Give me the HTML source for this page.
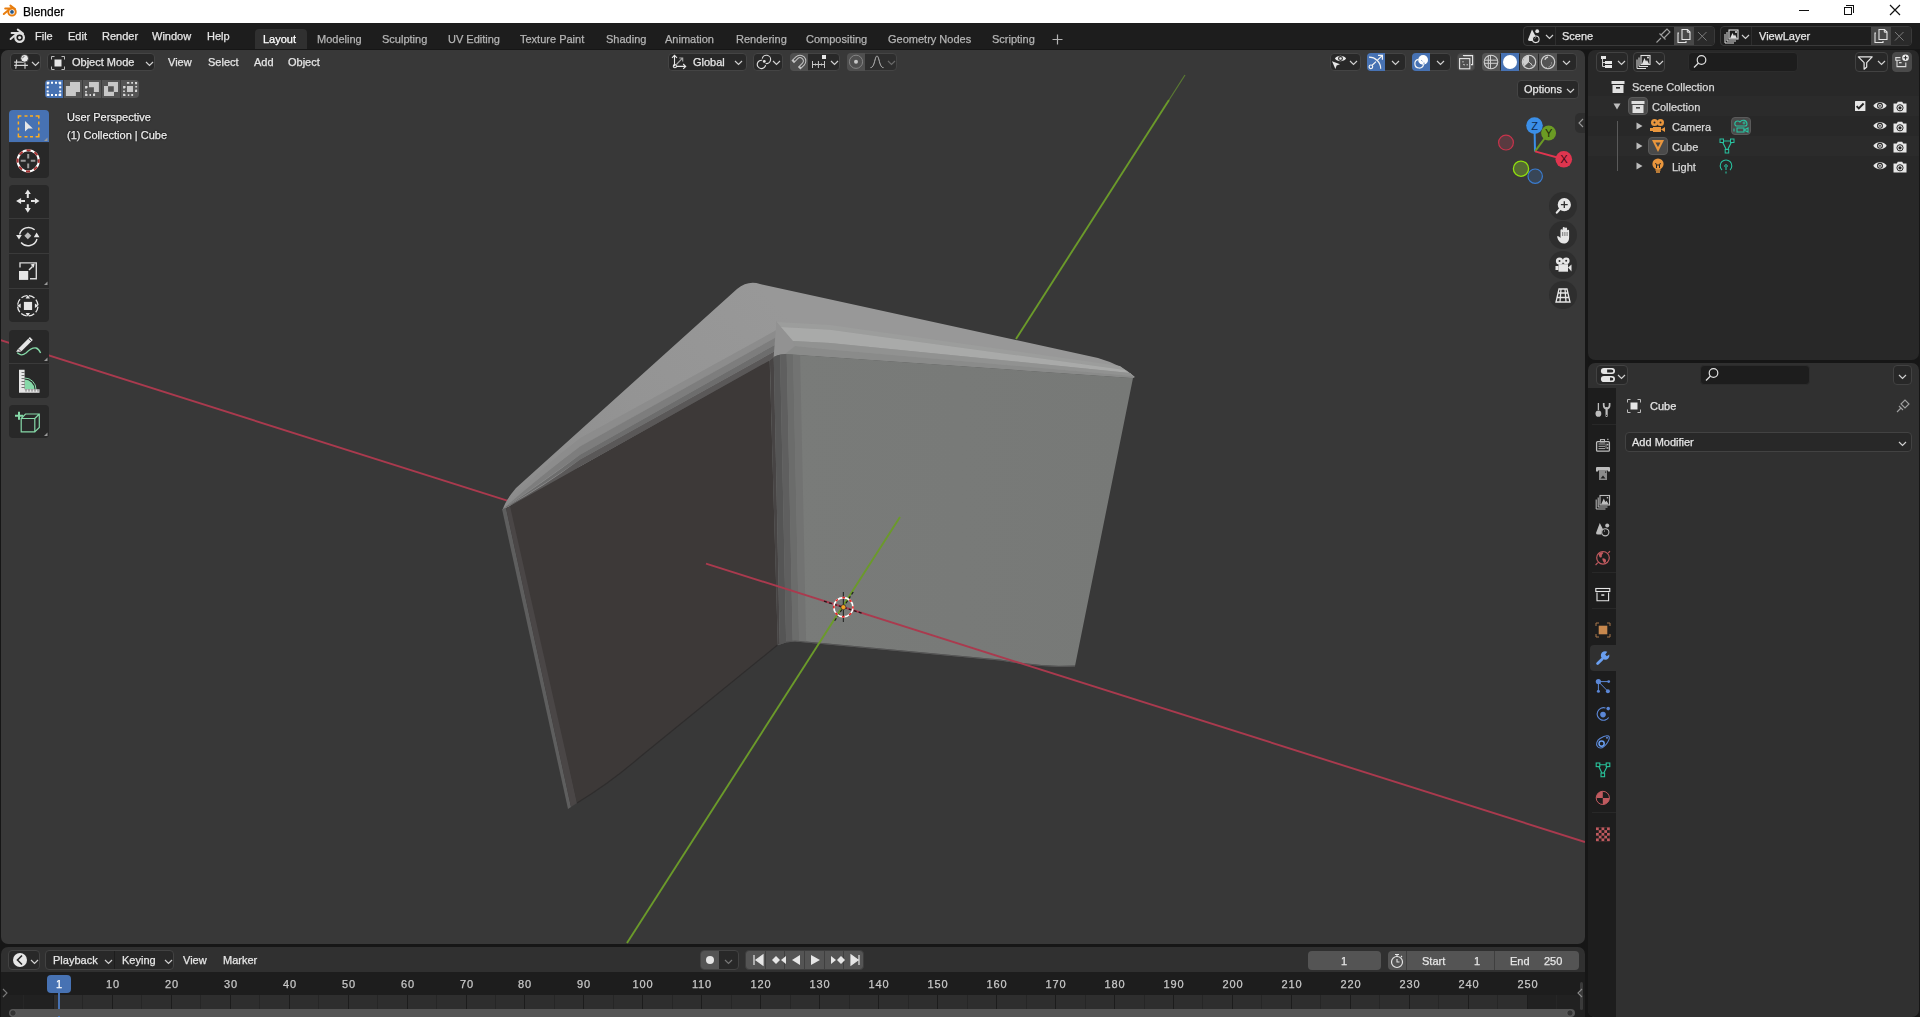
<!DOCTYPE html><html><head><meta charset="utf-8"><title>Blender</title><style>
*{margin:0;padding:0;box-sizing:border-box}
html,body{width:1920px;height:1017px;overflow:hidden;background:#161616;font-family:"Liberation Sans",sans-serif}
.a{position:absolute}
.t{position:absolute;white-space:nowrap;line-height:12px;font-size:11px;will-change:transform;-webkit-text-stroke:0.25px currentColor}
svg{overflow:visible}
</style></head><body>
<div class="a" style="left:0px;top:0px;width:1920px;height:23px;background:#ffffff"></div>
<svg class="a" style="left:3px;top:4px;" width="16" height="14" viewBox="0 0 16 14"><circle cx="9" cy="7.9" r="3.7" fill="none" stroke="#e87d0d" stroke-width="2"/>
<circle cx="9" cy="7.9" r="1.9" fill="#265787"/>
<path d="M2.2,4.4 H8.5 M7.4,1.6 L12,5 M0.8,10 L5,6.5" stroke="#e87d0d" stroke-width="2" stroke-linecap="round"/></svg>
<div class="t" style="left:23px;top:6px;color:#000;font-size:12px;">Blender</div>
<div class="a" style="left:1799px;top:10px;width:10px;height:1px;background:#111"></div>
<div class="a" style="left:1844px;top:7px;width:8px;height:8px;border:1px solid #111"></div>
<div class="a" style="left:1846px;top:5px;width:8px;height:8px;border-top:1px solid #111;border-right:1px solid #111"></div>
<svg class="a" style="left:1889px;top:4px;" width="12" height="12" viewBox="0 0 12 12"><path d="M1,1 L11,11 M11,1 L1,11" stroke="#111" stroke-width="1.2"/></svg>
<div class="a" style="left:0px;top:23px;width:1920px;height:26px;background:#1d1d1d"></div>
<svg class="a" style="left:9px;top:28px;" width="18" height="16" viewBox="0 0 18 16"><circle cx="10.6" cy="9.6" r="4.3" fill="none" stroke="#e0e0e0" stroke-width="2.2"/>
<circle cx="10.6" cy="9.6" r="1.6" fill="#e0e0e0"/>
<path d="M2.6,4.9 H11 M8.8,1.6 L14,5.5 M1.6,11 L6.5,6.8" stroke="#e0e0e0" stroke-width="2" stroke-linecap="round"/></svg>
<div class="t" style="left:35px;top:30px;color:#e6e6e6;font-size:11px;">File</div>
<div class="t" style="left:68px;top:30px;color:#e6e6e6;font-size:11px;">Edit</div>
<div class="t" style="left:102px;top:30px;color:#e6e6e6;font-size:11px;">Render</div>
<div class="t" style="left:152px;top:30px;color:#e6e6e6;font-size:11px;">Window</div>
<div class="t" style="left:207px;top:30px;color:#e6e6e6;font-size:11px;">Help</div>
<div class="a" style="left:255px;top:29px;width:52px;height:20px;background:#303030;border-radius:4px 4px 0 0"></div>
<div class="t" style="left:263px;top:33px;color:#ffffff;font-size:11px;">Layout</div>
<div class="t" style="left:317px;top:33px;color:#b4b4b4;font-size:11px;">Modeling</div>
<div class="t" style="left:382px;top:33px;color:#b4b4b4;font-size:11px;">Sculpting</div>
<div class="t" style="left:448px;top:33px;color:#b4b4b4;font-size:11px;">UV Editing</div>
<div class="t" style="left:520px;top:33px;color:#b4b4b4;font-size:11px;">Texture Paint</div>
<div class="t" style="left:606px;top:33px;color:#b4b4b4;font-size:11px;">Shading</div>
<div class="t" style="left:665px;top:33px;color:#b4b4b4;font-size:11px;">Animation</div>
<div class="t" style="left:736px;top:33px;color:#b4b4b4;font-size:11px;">Rendering</div>
<div class="t" style="left:806px;top:33px;color:#b4b4b4;font-size:11px;">Compositing</div>
<div class="t" style="left:888px;top:33px;color:#b4b4b4;font-size:11px;">Geometry Nodes</div>
<div class="t" style="left:992px;top:33px;color:#b4b4b4;font-size:11px;">Scripting</div>
<svg class="a" style="left:1052px;top:34px;" width="11" height="11" viewBox="0 0 11 11"><path d="M5.5,0.5 V10.5 M0.5,5.5 H10.5" stroke="#b4b4b4" stroke-width="1.2"/></svg>
<div class="a" style="left:1523px;top:26px;width:192px;height:20px;background:#1e1e1e;border:1px solid #3a3a3a;border-radius:4px;"></div>
<div class="a" style="left:1555px;top:27px;width:1px;height:18px;background:#2e2e2e"></div>
<div class="a" style="left:1674px;top:27px;width:20px;height:18px;background:#484848"></div>
<div class="a" style="left:1694px;top:27px;width:20px;height:18px;background:#2a2a2a;border-radius:0 3px 3px 0"></div>
<div class="t" style="left:1562px;top:30px;color:#e6e6e6;font-size:11px;">Scene</div>
<svg class="a" style="left:1676px;top:28px;" width="16" height="16" viewBox="0 0 16 16"><path d="M6,1.5 H11.5 L14,4 V11.5 H6Z" fill="none" stroke="#e6e6e6" stroke-width="1.1"/><path d="M11.3,1.5 V4.2 H14" fill="none" stroke="#e6e6e6" stroke-width="1"/><path d="M3,5 H2 V14.5 H10 V13" fill="none" stroke="#e6e6e6" stroke-width="1.1"/></svg>
<svg class="a" style="left:1697px;top:31px;" width="11" height="11" viewBox="0 0 11 11"><path d="M1,1 L9.5,9.5 M9.5,1 L1,9.5" stroke="#7a7a7a" stroke-width="1"/></svg>
<svg class="a" style="left:1527px;top:28px;" width="18" height="16" viewBox="0 0 18 16"><path d="M5,1.5 L1,11.5 Q1,13 3,13 H6 Q5.5,9.5 8.5,8Z" fill="#e0e0e0"/>
<circle cx="10.2" cy="3.2" r="1.9" fill="#e0e0e0"/><circle cx="8.8" cy="11.3" r="3.3" fill="#1e1e1e" stroke="#e0e0e0" stroke-width="1.1"/><path d="M7.6,10.6 L8.6,9.7" stroke="#e0e0e0" stroke-width="0.9"/></svg>
<svg class="a" style="left:1545px;top:34px;" width="9" height="6" viewBox="0 0 9 6"><polyline points="1,1 4.5,4.5 8,1" fill="none" stroke="#d0d0d0" stroke-width="1.2"/></svg>
<svg class="a" style="left:1655px;top:28px;" width="16" height="16" viewBox="0 0 16 16"><path d="M1.5,14.5 L6,10 M4.5,5.5 L10.5,11.5 M6,7 L10,3 L12,1 L15,4 L13,6 L9,10" fill="none" stroke="#a0a0a0" stroke-width="1.1"/></svg>
<div class="a" style="left:1720px;top:26px;width:192px;height:20px;background:#1e1e1e;border:1px solid #3a3a3a;border-radius:4px;"></div>
<div class="a" style="left:1751px;top:27px;width:1px;height:18px;background:#2e2e2e"></div>
<div class="a" style="left:1871px;top:27px;width:20px;height:18px;background:#484848"></div>
<div class="a" style="left:1891px;top:27px;width:20px;height:18px;background:#2a2a2a;border-radius:0 3px 3px 0"></div>
<div class="t" style="left:1759px;top:30px;color:#e6e6e6;font-size:11px;">ViewLayer</div>
<svg class="a" style="left:1873px;top:28px;" width="16" height="16" viewBox="0 0 16 16"><path d="M6,1.5 H11.5 L14,4 V11.5 H6Z" fill="none" stroke="#e6e6e6" stroke-width="1.1"/><path d="M11.3,1.5 V4.2 H14" fill="none" stroke="#e6e6e6" stroke-width="1"/><path d="M3,5 H2 V14.5 H10 V13" fill="none" stroke="#e6e6e6" stroke-width="1.1"/></svg>
<svg class="a" style="left:1894px;top:31px;" width="11" height="11" viewBox="0 0 11 11"><path d="M1,1 L9.5,9.5 M9.5,1 L1,9.5" stroke="#7a7a7a" stroke-width="1"/></svg>
<svg class="a" style="left:1724px;top:28px;" width="18" height="16" viewBox="0 0 18 16"><rect x="5" y="2" width="9" height="9" fill="none" stroke="#e0e0e0" stroke-width="1.1"/>
<path d="M6,10.5 L8.5,5 L10,8 L11,6.5 L13,10.5Z" fill="#e0e0e0"/><circle cx="12" cy="4" r="1" fill="#e0e0e0"/>
<path d="M3,4 V13 H12 M1,6 V15 H10" fill="none" stroke="#e0e0e0" stroke-width="1"/></svg>
<svg class="a" style="left:1741px;top:34px;" width="9" height="6" viewBox="0 0 9 6"><polyline points="1,1 4.5,4.5 8,1" fill="none" stroke="#d0d0d0" stroke-width="1.2"/></svg>
<div class="a" style="left:1px;top:50px;width:1584px;height:894px;background:#383838;border-radius:7px;overflow:hidden">
<svg class="a" style="left:-1px;top:-50px" width="1920" height="1017" viewBox="0 0 1920 1017">
<defs>
<linearGradient id="lstrip" x1="0" y1="1" x2="0.4" y2="0"><stop offset="0" stop-color="#8a8a8a"/><stop offset="1" stop-color="#969696"/></linearGradient>
</defs>
<line x1="0" y1="340" x2="508" y2="500.9" stroke="#aa3a4e" stroke-width="1.9"/>
<line x1="1016" y1="339" x2="1169" y2="100" stroke="#6b9a2a" stroke-width="1.9"/>
<line x1="1169" y1="100" x2="1185" y2="75" stroke="#5a7a32" stroke-width="1.2"/>
<defs><linearGradient id="tl" x1="502" y1="509" x2="760" y2="284" gradientUnits="userSpaceOnUse"><stop offset="0" stop-color="#8c8c8c"/><stop offset="0.5" stop-color="#949494"/><stop offset="1" stop-color="#989898"/></linearGradient>
<linearGradient id="rf" x1="790" y1="0" x2="1130" y2="0" gradientUnits="userSpaceOnUse"><stop offset="0" stop-color="#797b79"/><stop offset="1" stop-color="#777977"/></linearGradient></defs>
<path d="M502.7,509.7 Q505,501 516,488 L737,289 Q748,280 760,284 L1098,358 Q1122,365 1135,377 L1133,378 L785,354 Q776,355 773.6,357.2 L769.7,360.4 L510,506 Z" fill="url(#tl)"/>
<path d="M776,330.3 L580,438.3 Q540,468.3 504,508 Q545,471.5 580,446.5 L776,337.2 Z" fill="#8c8c8c"/>
<path d="M776,337.2 L580,446.5 Q540,476.5 504,508 Q545,479.7 580,454.7 L776,344.2 Z" fill="#7d7d7d"/>
<path d="M776,344.2 L580,454.7 Q540,484.7 504,508 Q545,484.5 580,459.5 L776,350.5 Z" fill="#6d6d6d"/>
<path d="M776,350.5 L580,459.5 Q540,489.5 504,508 Q545,491.6 580,466.6 L776,357.5 Z" fill="#5a5858"/>
<path d="M776,321 L795,341.5 L795,346 L785,354 Q776,355 773.6,357.2 L776,327Z" fill="#929292"/>
<path d="M777,322 L830,325 L1120,366 L1135,377 L1125,370 L830,329.7 L781,327Z" fill="#9c9d9c"/>
<path d="M781,327 L830,329.7 L1125,370 L1133,376 L1130,373 L830,343 L793,341Z" fill="#a9aaa9"/>
<path d="M793,341 L830,343 L1130,373 L1133,378 L1133,376 L830,349.5 L795,346Z" fill="#919291"/>
<path d="M795,346 L830,349.5 L1133,376 L1133,378 L785,354Z" fill="#8a8b8a"/>
<path d="M502,509 L568,809 L571,807 L506,508 Z" fill="#5e5e5e"/>
<path d="M506,508 L571,807 L577,803 L514,505 Z" fill="#4a4646"/>
<path d="M510,506 L769.7,360.4 L777.8,644.8 L640,757 Q610,783 577,803 Z" fill="#3d3938"/>
<path d="M577,803 Q610,783 640,757 L777.8,644.8" fill="none" stroke="#2f2d2d" stroke-width="1.2"/>
<path d="M769.7,360.4 L773.6,357.2 Q776,355 785,354 L1133,378 L1075,666 Q1045,668 1000,660 L795,641 Q786,641 777.8,644.8 Z" fill="url(#rf)"/>
<path d="M777.8,644.8 Q786,641 795,641 L1000,660 Q1045,668 1075,666" fill="none" stroke="#5a5a5a" stroke-width="1"/>
<clipPath id="rfc"><path d="M769.7,360.4 L773.6,357.2 Q776,355 785,354 L1133,378 L1075,666 Q1045,668 1000,660 L795,641 Q786,641 777.8,644.8 Z"/></clipPath>
<g clip-path="url(#rfc)">
<path d="M769.7,350 L773.6,350 L779.9,650 L776.0,650 Z" fill="#474444"/>
<path d="M773.6,350 L780,350 L786.3,650 L779.9,650 Z" fill="#555555"/>
<path d="M780,350 L786.6,350 L792.9,650 L786.3,650 Z" fill="#5f5f5f"/>
<path d="M786.6,350 L793,350 L799.3,650 L792.9,650 Z" fill="#6b6c6b"/>
<path d="M793,350 L800,350 L806.3,650 L799.3,650 Z" fill="#727372"/>
</g>
<path d="M777.8,644.8 Q786,641 795,641 L1000,660 Q1045,668 1075,666" fill="none" stroke="#555" stroke-width="1"/>
<line x1="706" y1="563.6" x2="1585" y2="842" stroke="#aa3a4e" stroke-width="1.9"/>
<line x1="627" y1="943" x2="900" y2="517" stroke="#6b9a2a" stroke-width="1.9"/>
<path d="M824,601.2 L862.5,613.4" stroke="#111" stroke-width="1.3" stroke-dasharray="3 2.2" opacity="0.85"/>
<path d="M853.2,592 L833.9,622" stroke="#111" stroke-width="1.3" stroke-dasharray="3 2.2" opacity="0.85"/>
<path d="M843.4,592 V622" stroke="#1a1a1a" stroke-width="1.2" opacity="0.8"/>
<circle cx="843.4" cy="607.2" r="9.6" fill="none" stroke="#ffffff" stroke-width="1.7"/>
<circle cx="843.4" cy="607.2" r="9.6" fill="none" stroke="#e82828" stroke-width="1.7" stroke-dasharray="2.8 4.74" stroke-dashoffset="1.4"/>
<circle cx="843.4" cy="607.2" r="2.5" fill="#f5a020" stroke="#2a2a3a" stroke-width="0.7"/>
</svg>
</div>
<div class="a" style="left:10px;top:53px;width:31px;height:18px;background:#282828;border:1px solid #444444;border-radius:4px;"></div>
<svg class="a" style="left:12px;top:54px;" width="22" height="17" viewBox="0 0 22 17"><path d="M2.2,8.1 H13.4 M2.2,11.4 H15.9 M4.7,5.6 L3.8,14.75 M13,8.9 V14.75" stroke="#d8d8d8" stroke-width="1.1"/><circle cx="12.6" cy="4.3" r="3.9" fill="#e8e8e8" stroke="#282828" stroke-width="0.8"/><path d="M10.6,4.2 A2.2,2.2 0 0 1 12.5,2.3" fill="none" stroke="#555" stroke-width="0.8"/></svg>
<svg class="a" style="left:31px;top:61px;" width="9" height="6" viewBox="0 0 9 6"><polyline points="1,1 4.5,4.5 8,1" fill="none" stroke="#d0d0d0" stroke-width="1.2"/></svg>
<div class="a" style="left:47px;top:53px;width:108px;height:18px;background:#282828;border:1px solid #444444;border-radius:4px;"></div>
<svg class="a" style="left:50px;top:55px;" width="16" height="16" viewBox="0 0 16 16"><rect x="4.5" y="4.5" width="7" height="7" fill="#e6e6e6"/>
<path d="M1.5,4.5 V1.5 H4.5 M11.5,1.5 H14.5 V4.5 M14.5,11.5 V14.5 H11.5 M4.5,14.5 H1.5 V11.5" fill="none" stroke="#bcbcbc" stroke-width="1"/></svg>
<div class="t" style="left:72px;top:56px;color:#e6e6e6;font-size:11px;">Object Mode</div>
<svg class="a" style="left:145px;top:61px;" width="9" height="6" viewBox="0 0 9 6"><polyline points="1,1 4.5,4.5 8,1" fill="none" stroke="#d0d0d0" stroke-width="1.2"/></svg>
<div class="t" style="left:168px;top:56px;color:#e6e6e6;font-size:11px;">View</div>
<div class="t" style="left:208px;top:56px;color:#e6e6e6;font-size:11px;">Select</div>
<div class="t" style="left:254px;top:56px;color:#e6e6e6;font-size:11px;">Add</div>
<div class="t" style="left:288px;top:56px;color:#e6e6e6;font-size:11px;">Object</div>
<div class="a" style="left:668px;top:53px;width:79px;height:18px;background:#282828;border:1px solid #444444;border-radius:4px;"></div>
<svg class="a" style="left:668px;top:53px;" width="20" height="18" viewBox="0 0 20 18"><path d="M6.5,13.2 V2.4 M4,4.9 L6.5,2.3 L9,4.9 M8.6,13.4 H17.6 M15.2,11 L17.7,13.4 L15.2,15.9" fill="none" stroke="#e6e6e6" stroke-width="1.1"/>
<path d="M8.4,11.5 L14.5,5.2 M11.3,5 H14.7 V8.4" fill="none" stroke="#a8a8a8" stroke-width="1.1"/>
<circle cx="6.9" cy="13.2" r="1.6" fill="none" stroke="#e6e6e6" stroke-width="1.1"/></svg>
<div class="t" style="left:693px;top:56px;color:#e6e6e6;font-size:11px;">Global</div>
<svg class="a" style="left:734px;top:60px;" width="9" height="6" viewBox="0 0 9 6"><polyline points="1,1 4.5,4.5 8,1" fill="none" stroke="#d0d0d0" stroke-width="1.2"/></svg>
<div class="a" style="left:753px;top:53px;width:30px;height:18px;background:#282828;border:1px solid #444444;border-radius:4px;"></div>
<svg class="a" style="left:753px;top:53px;" width="20" height="18" viewBox="0 0 20 18"><path d="M12.6,12.1 A4.2,4.2 0 1 1 9.23,7.26" fill="none" stroke="#e0e0e0" stroke-width="1.1"/><path d="M9.26,5.67 A4.2,4.2 0 1 1 12.67,10.54" fill="none" stroke="#e0e0e0" stroke-width="1.1"/><circle cx="11.3" cy="8.4" r="1.4" fill="#e6e6e6"/></svg>
<svg class="a" style="left:772px;top:60px;" width="9" height="6" viewBox="0 0 9 6"><polyline points="1,1 4.5,4.5 8,1" fill="none" stroke="#d0d0d0" stroke-width="1.2"/></svg>
<div class="a" style="left:790px;top:53px;width:50px;height:18px;background:#282828;border:1px solid #444444;border-radius:4px;"></div>
<div class="a" style="left:790px;top:53px;width:18px;height:18px;background:#4f4f4f;border-radius:4px 0 0 4px"></div>
<svg class="a" style="left:790px;top:53px;" width="18" height="18" viewBox="0 0 18 18"><path d="M4,7.6 L6.8,4.8 A4.5,4.5 0 0 1 13.2,11.2 L10.4,14" fill="none" stroke="#c4c4c4" stroke-width="3.6" stroke-linecap="square"/>
<path d="M4.2,7.4 L6.8,4.8 A4.5,4.5 0 0 1 13.2,11.2 L10.6,13.8" fill="none" stroke="#4f4f4f" stroke-width="1.6"/></svg>
<svg class="a" style="left:808px;top:53px;" width="22" height="18" viewBox="0 0 22 18"><rect x="14" y="2" width="4" height="4" fill="#e6e6e6"/><path d="M4.5,8 V15 M10.4,8 V15 M16.5,8 V15 M4.5,11.5 H16.5 M7.5,10.5 V12.5 M13.5,10.5 V12.5" stroke="#c8c8c8" stroke-width="1"/></svg>
<svg class="a" style="left:830px;top:60px;" width="9" height="6" viewBox="0 0 9 6"><polyline points="1,1 4.5,4.5 8,1" fill="none" stroke="#d0d0d0" stroke-width="1.2"/></svg>
<div class="a" style="left:847px;top:53px;width:50px;height:18px;background:#2d2d2d;border:1px solid #444444;border-radius:4px;"></div>
<div class="a" style="left:847px;top:53px;width:18px;height:18px;background:#4f4f4f;border-radius:4px 0 0 4px"></div>
<svg class="a" style="left:847px;top:53px;" width="18" height="18" viewBox="0 0 18 18"><circle cx="9" cy="8.8" r="6.6" fill="none" stroke="#8a8a8a" stroke-width="0.9"/><circle cx="9" cy="8.8" r="2" fill="#c8c8c8"/></svg>
<svg class="a" style="left:865px;top:53px;" width="20" height="18" viewBox="0 0 20 18"><path d="M5.5,14.6 C8,14.6 9,11 10,7 C11,3 11.5,3.2 12,3.2 C12.5,3.2 13,3 14,7 C15,11 16,14.6 18.5,14.6" fill="none" stroke="#c0c0c0" stroke-width="1"/></svg>
<svg class="a" style="left:887px;top:60px;" width="9" height="6" viewBox="0 0 9 6"><polyline points="1,1 4.5,4.5 8,1" fill="none" stroke="#6a6a6a" stroke-width="1.2"/></svg>
<div class="a" style="left:1330px;top:53px;width:31px;height:18px;background:#282828;border:1px solid #444444;border-radius:4px;"></div>
<svg class="a" style="left:1330px;top:53px;" width="18" height="18" viewBox="0 0 18 18"><path d="M4.9,5.5 C7.2,1.8 13.8,1.8 16.1,5.5 C13.8,9.2 7.2,9.2 4.9,5.5Z" fill="#e6e6e6"/><circle cx="10.5" cy="5.5" r="1.9" fill="none" stroke="#282828" stroke-width="1.1"/>
<path d="M2,8.2 L10,11.3 L6.6,12.4 L5.4,15.9Z" fill="#e6e6e6"/></svg>
<svg class="a" style="left:1349px;top:60px;" width="9" height="6" viewBox="0 0 9 6"><polyline points="1,1 4.5,4.5 8,1" fill="none" stroke="#d0d0d0" stroke-width="1.2"/></svg>
<div class="a" style="left:1367px;top:53px;width:39px;height:18px;background:#282828;border:1px solid #444444;border-radius:4px;"></div>
<div class="a" style="left:1367px;top:53px;width:18px;height:18px;background:#4772b3;border-radius:4px 0 0 4px"></div>
<svg class="a" style="left:1367px;top:53px;" width="18" height="18" viewBox="0 0 18 18"><path d="M2,4.2 A11.5,11.5 0 0 1 13.7,15.7" fill="none" stroke="#f4f4f4" stroke-width="1.2"/>
<path d="M5.2,12.3 L9,8.6 M10,7.6 L15.4,2.4 M11,2.4 H15.4 V6.8" fill="none" stroke="#f4f4f4" stroke-width="1.2"/><circle cx="3.9" cy="13.8" r="1.8" fill="none" stroke="#f4f4f4" stroke-width="1.2"/></svg>
<svg class="a" style="left:1391px;top:60px;" width="9" height="6" viewBox="0 0 9 6"><polyline points="1,1 4.5,4.5 8,1" fill="none" stroke="#d0d0d0" stroke-width="1.2"/></svg>
<div class="a" style="left:1412px;top:53px;width:39px;height:18px;background:#282828;border:1px solid #444444;border-radius:4px;"></div>
<div class="a" style="left:1412px;top:53px;width:18px;height:18px;background:#4772b3;border-radius:4px 0 0 4px"></div>
<svg class="a" style="left:1412px;top:53px;" width="18" height="18" viewBox="0 0 18 18"><path d="M6.5,6.3 A4.4,4.4 0 1 0 11.6,11.4" fill="none" stroke="#f4f4f4" stroke-width="1.2"/>
<circle cx="11.1" cy="6.9" r="4.9" fill="#ffffff"/><path d="M9.3,7.2 L10.5,8.4 M12,9.5 V11" stroke="#4772b3" stroke-width="0.8"/></svg>
<svg class="a" style="left:1436px;top:60px;" width="9" height="6" viewBox="0 0 9 6"><polyline points="1,1 4.5,4.5 8,1" fill="none" stroke="#d0d0d0" stroke-width="1.2"/></svg>
<div class="a" style="left:1457px;top:53px;width:18px;height:18px;background:#4f4f4f;border:1px solid #444444;border-radius:4px;"></div>
<svg class="a" style="left:1457px;top:53px;" width="18" height="18" viewBox="0 0 18 18"><rect x="2.6" y="5.6" width="10.2" height="10.2" fill="none" stroke="#e6e6e6" stroke-width="1.1"/><path d="M6.5,3 V2.6 H15.6 V11.6 H14" fill="none" stroke="#e6e6e6" stroke-width="1.1"/>
<path d="M6,8 V9.5 M6,11 L6.8,11.8 H8 M9.5,11.8 H11" stroke="#d8d8d8" stroke-width="0.9"/></svg>
<div class="a" style="left:1482px;top:53px;width:95px;height:18px;background:#282828;border:1px solid #444444;border-radius:4px;"></div>
<div class="a" style="left:1482px;top:53px;width:18px;height:18px;background:#545454;border-radius:4px 0 0 4px"></div>
<div class="a" style="left:1501px;top:53px;width:18px;height:18px;background:#4772b3"></div>
<div class="a" style="left:1520px;top:53px;width:18px;height:18px;background:#545454"></div>
<div class="a" style="left:1539px;top:53px;width:18px;height:18px;background:#545454"></div>
<svg class="a" style="left:1482px;top:53px;" width="18" height="18" viewBox="0 0 18 18"><circle cx="9" cy="9" r="6.8" fill="none" stroke="#d0d0d0" stroke-width="1.1"/><path d="M6.3,2.5 V15.5 M8.5,2.2 V15.8 M2.3,7.2 H15.7 M2.3,10.3 H15.7" stroke="#d0d0d0" stroke-width="1"/></svg>
<svg class="a" style="left:1501px;top:53px;" width="18" height="18" viewBox="0 0 18 18"><circle cx="9" cy="9" r="7" fill="#ffffff"/></svg>
<svg class="a" style="left:1520px;top:53px;" width="18" height="18" viewBox="0 0 18 18"><circle cx="9" cy="9" r="6.7" fill="none" stroke="#d0d0d0" stroke-width="1.1"/><path d="M9,2.3 V9 L4.5,13.2 A6.7,6.7 0 0 1 9,2.3Z" fill="#cfcfcf"/><path d="M9,9 L12.5,12.5 M11,11.5 L11.8,10.8 M12.5,13.3 L13.4,12.3 M10.3,13.3 L11,12.6" stroke="#d0d0d0" stroke-width="0.9"/></svg>
<svg class="a" style="left:1539px;top:53px;" width="18" height="18" viewBox="0 0 18 18"><circle cx="9" cy="9" r="6.7" fill="none" stroke="#d0d0d0" stroke-width="1.1"/><path d="M5.8,6.7 A4.5,4.5 0 0 1 9,4" fill="none" stroke="#d0d0d0" stroke-width="1.4"/><path d="M13,9.5 L12.2,10.3 M12.3,11.8 L11.3,12.6 M10.5,13.5 L9.6,14 M8,14.2 L7.5,14.5" stroke="#d0d0d0" stroke-width="0.9"/></svg>
<svg class="a" style="left:1562px;top:60px;" width="9" height="6" viewBox="0 0 9 6"><polyline points="1,1 4.5,4.5 8,1" fill="none" stroke="#d0d0d0" stroke-width="1.2"/></svg>
<div class="a" style="left:1517px;top:80px;width:62px;height:19px;background:#282828;border:1px solid #444444;border-radius:4px;"></div>
<div class="t" style="left:1524px;top:83px;color:#e6e6e6;font-size:11px;">Options</div>
<svg class="a" style="left:1566px;top:88px;" width="9" height="6" viewBox="0 0 9 6"><polyline points="1,1 4.5,4.5 8,1" fill="none" stroke="#d0d0d0" stroke-width="1.2"/></svg>
<div class="a" style="left:45px;top:80px;width:94px;height:18px;background:#545454;border-radius:4px"></div>
<div class="a" style="left:45px;top:80px;width:18px;height:18px;background:#4772b3;border-radius:4px 0 0 4px"></div>
<div class="a" style="left:63px;top:80px;width:1px;height:18px;background:#3d3d3d"></div>
<div class="a" style="left:82px;top:80px;width:1px;height:18px;background:#3d3d3d"></div>
<div class="a" style="left:101px;top:80px;width:1px;height:18px;background:#3d3d3d"></div>
<div class="a" style="left:120px;top:80px;width:1px;height:18px;background:#3d3d3d"></div>
<svg class="a" style="left:45px;top:80px;" width="18" height="18" viewBox="0 0 18 18"><path d="M2.7,4.4 V2.8 H4.4 M13.6,2.8 H15.2 V4.4 M2.7,13.4 V15 H4.4 M13.6,15 H15.2 V13.4 M6,2.8 H8 M10,2.8 H12 M6,15 H8 M10,15 H12 M2.7,6.3 V8.3 M2.7,10.4 V12.3 M15.2,6.3 V8.3 M15.2,10.4 V12.3" fill="none" stroke="#ffffff" stroke-width="2"/></svg>
<svg class="a" style="left:64px;top:80px;" width="18" height="18" viewBox="0 0 18 18"><path d="M1.9,6 H6 V1.9 H16 V12 H11.9 V16 H1.9Z" fill="#c8c8c8"/></svg>
<svg class="a" style="left:83px;top:80px;" width="18" height="18" viewBox="0 0 18 18"><path d="M6,1.9 H15.9 V12 H10.9 V7.2 H6Z" fill="#c8c8c8"/><path d="M3,8.5 V7 H4.5 M3,11 V12.5 M3,13.6 V15 H4.5 M6.5,15 H8 M10,15 H11.2 V13.6" fill="none" stroke="#d8d8d8" stroke-width="1.8"/></svg>
<svg class="a" style="left:102px;top:80px;" width="18" height="18" viewBox="0 0 18 18"><path d="M6,1.9 H16 V12 H12 V16 H2 V6 H6Z M6.1,6.3 V11.8 H11.8 V6.3Z" fill="#c8c8c8" fill-rule="evenodd"/></svg>
<svg class="a" style="left:121px;top:80px;" width="18" height="18" viewBox="0 0 18 18"><rect x="6" y="6" width="6" height="6" fill="#c8c8c8"/><path d="M6.8,3.8 V2.8 H8.3 M10.2,2.8 H12 M14,2.8 H15.2 V4.2 M15.2,6 V7.6 M15.2,9.6 V11.2 H14 M3,8.4 V7 H4.5 M3,10.5 V12 M3,13.8 V15.2 H4.5 M6.8,15.2 H8.3 M10.3,15.2 H11.2 V14" fill="none" stroke="#d8d8d8" stroke-width="1.8"/></svg>
<div class="t" style="left:67px;top:111px;color:#f0f0f0;font-size:11px;text-shadow:0 0 2px #000,0 0 1px #000">User Perspective</div>
<div class="t" style="left:67px;top:129px;color:#f0f0f0;font-size:11px;text-shadow:0 0 2px #000,0 0 1px #000">(1) Collection | Cube</div>
<div class="a" style="left:9px;top:110px;width:40px;height:33px;background:#4772b3;border-radius:4px 4px 0 0"></div>
<div class="a" style="left:9px;top:143px;width:40px;height:35px;background:#282828;border-radius:0 0 4px 4px"></div>
<div class="a" style="left:9px;top:185px;width:40px;height:33px;background:#282828;border-radius:4px 4px 0 0"></div>
<div class="a" style="left:9px;top:218px;width:40px;height:35px;background:#282828;border-radius:0"></div>
<div class="a" style="left:9px;top:253px;width:40px;height:35px;background:#282828;border-radius:0"></div>
<div class="a" style="left:9px;top:288px;width:40px;height:34px;background:#282828;border-radius:0 0 4px 4px"></div>
<div class="a" style="left:9px;top:330px;width:40px;height:33px;background:#282828;border-radius:4px 4px 0 0"></div>
<div class="a" style="left:9px;top:363px;width:40px;height:35px;background:#282828;border-radius:0 0 4px 4px"></div>
<div class="a" style="left:9px;top:405px;width:40px;height:33px;background:#282828;border-radius:4px"></div>
<div class="a" style="left:9px;top:218px;width:40px;height:1px;background:#3a3a3a"></div>
<div class="a" style="left:9px;top:253px;width:40px;height:1px;background:#3a3a3a"></div>
<div class="a" style="left:9px;top:288px;width:40px;height:1px;background:#3a3a3a"></div>
<div class="a" style="left:9px;top:363px;width:40px;height:1px;background:#3a3a3a"></div>
<div class="a" style="left:9px;top:142px;width:40px;height:1px;background:#2e2e2e"></div>
<svg class="a" style="left:9px;top:110px;" width="40" height="33" viewBox="0 0 40 33"><path d="M9.4,8.4 V6 H12.4 M15.5,6 H18.5 M21,6 H24 M26.6,6 H29.8 V8.4 M29.8,11.5 V14.5 M29.8,17.5 V20.5 M29.8,23.5 V26.8 H26.6 M24,26.8 H21 M18.5,26.8 H15.5 M12.4,26.8 H9.4 V23.5 M9.4,20.5 V17.5 M9.4,14.5 V11.5" fill="none" stroke="#ffad1f" stroke-width="1.5"/>
<path d="M16,11 L23.8,18.4 L19.2,18.4 L16,21.5Z" fill="#e6e6e6"/><path d="M38.5,31 L35,31 L38.5,27.5Z" fill="#9a9a9a"/></svg>
<svg class="a" style="left:9px;top:143px;" width="40" height="35" viewBox="0 0 40 35"><circle cx="19.2" cy="17.8" r="10.6" fill="none" stroke="#ffffff" stroke-width="2"/>
<circle cx="19.2" cy="17.8" r="10.6" fill="none" stroke="#a83232" stroke-width="2" stroke-dasharray="4.16 4.16" stroke-dashoffset="2"/>
<path d="M19.2,11 V15.6 M19.2,20.6 V25.2 M11.7,17.8 H16.7 M21.8,17.8 H26.3" stroke="#9a9a9a" stroke-width="2"/></svg>
<svg class="a" style="left:9px;top:185px;" width="40" height="33" viewBox="0 0 40 33"><path d="M18.8,4.4 L21.8,9 H15.8Z M18.8,27.7 L21.8,23 H15.8Z M7.1,16 L12.1,13 V19Z M30.5,16 L25.9,13 V19Z" fill="#e6e6e6"/>
<path d="M18.8,9 V12.9 M18.8,19.2 V23 M12.1,16 H16 M22,16 H25.9" stroke="#e6e6e6" stroke-width="2"/></svg>
<svg class="a" style="left:9px;top:218px;" width="40" height="35" viewBox="0 0 40 35"><path d="M10.6,16.5 A9.2,9.2 0 0 1 25.6,11.8 M28,21 A9.2,9.2 0 0 1 12.1,24.5" fill="none" stroke="#e6e6e6" stroke-width="1.4"/>
<path d="M7.1,17 H12.8 L10,21.6Z M24.8,19.2 H30.5 L27.6,14.6Z" fill="#e6e6e6"/><path d="M18.8,14.3 L22.3,17.8 L18.8,21.3 L15.3,17.8Z" fill="#bdbdbd"/></svg>
<svg class="a" style="left:9px;top:253px;" width="40" height="35" viewBox="0 0 40 35"><rect x="10" y="18" width="9.2" height="8.9" fill="#e6e6e6"/>
<path d="M11,14.5 V9.9 H27.3 V25.8 H21" fill="none" stroke="#d8d8d8" stroke-width="1.4"/>
<path d="M20,17 L23.5,13.5" stroke="#e6e6e6" stroke-width="1.5"/><path d="M21.5,11.5 L25.7,10.5 L24.7,14.7Z" fill="#e6e6e6"/><path d="M38.5,32 L35,32 L38.5,28.5Z" fill="#9a9a9a"/></svg>
<svg class="a" style="left:9px;top:288px;" width="40" height="34" viewBox="0 0 40 34"><circle cx="18.8" cy="17.8" r="10.2" fill="none" stroke="#e6e6e6" stroke-width="1.3" stroke-dasharray="6 2"  stroke-dashoffset="-1"/>
<rect x="14.9" y="13.9" width="8.2" height="8.1" fill="#e6e6e6"/>
<path d="M18.8,7.1 L21,10.6 H16.6Z M18.8,28.5 L21,25 H16.6Z M8.2,17.8 L11.7,15.6 V20Z M29.4,17.8 L25.9,15.6 V20Z" fill="#e6e6e6"/></svg>
<svg class="a" style="left:9px;top:330px;" width="40" height="33" viewBox="0 0 40 33"><path d="M7.1,21.7 L9,18.9 L20.9,7 L23.8,9.9 L11.9,21.8Z" fill="#e6e6e6"/>
<path d="M9.3,18.8 L12,21.5 M19.4,8.5 L22.2,11.3" stroke="#282828" stroke-width="0.8"/>
<path d="M8.2,22.8 C11,25 13,26 17,23 C21,19 24,17.5 27,18 C29,18.5 30.5,20.5 31.6,23" fill="none" stroke="#86d9a8" stroke-width="1.3"/><path d="M38.5,31 L35,31 L38.5,27.5Z" fill="#9a9a9a"/></svg>
<svg class="a" style="left:9px;top:363px;" width="40" height="35" viewBox="0 0 40 35"><path d="M15.6,26.3 V16.6 A9.9,9.9 0 0 1 25.5,26.3Z" fill="#86d9a8"/>
<path d="M15.6,15 A11.3,11.3 0 0 1 27,26.3" fill="none" stroke="#86d9a8" stroke-width="1"/>
<path d="M10,6.8 H15.6 V26.3 H30.5 V29.8 H10Z" fill="#e6e6e6"/>
<path d="M12.5,9.5 H15.6 M12.5,12.5 H15.6 M12.5,15.5 H15.6 M12.5,18.5 H15.6 M12.5,21.5 H15.6 M12.5,24.5 H15.6 M17,26.3 V28.6 M20,26.3 V28.6 M23,26.3 V28.6 M26,26.3 V28.6 M29,26.3 V28.6" stroke="#555" stroke-width="0.8"/></svg>
<svg class="a" style="left:9px;top:405px;" width="40" height="33" viewBox="0 0 40 33"><path d="M10,6.8 V14.8 M6,10.8 H14" stroke="#86d9a8" stroke-width="2"/>
<path d="M12.2,13.5 H25.8 V26.9 H12.2Z M12.2,13.5 L16.5,9 H30.3 V22.5 L25.8,26.9 M25.8,13.5 L30.3,9" fill="none" stroke="#86d9a8" stroke-width="1.2"/><path d="M38.5,31 L35,31 L38.5,27.5Z" fill="#9a9a9a"/></svg>
<svg class="a" style="left:1490px;top:105px;" width="100" height="90" viewBox="0 0 100 90">
<circle cx="16" cy="37.6" r="7.4" fill="#5a3a40" stroke="#c8344c" stroke-width="1.2"/>
<circle cx="45.2" cy="71.2" r="7.2" fill="#384657" stroke="#3a7cd0" stroke-width="1.2"/>
<circle cx="31" cy="63.7" r="7.6" fill="#556a33" stroke="#8fdd0f" stroke-width="1.3"/>
<line x1="45" y1="46.4" x2="44.5" y2="20" stroke="#3b8fe8" stroke-width="2"/>
<line x1="45" y1="46.4" x2="58.6" y2="28" stroke="#6b9b24" stroke-width="2"/>
<line x1="45" y1="46.4" x2="73.8" y2="54.3" stroke="#e0354f" stroke-width="2"/>
<circle cx="44.5" cy="20.6" r="8.3" fill="#3b8fe8"/>
<circle cx="58.6" cy="28" r="7.5" fill="#6b9b24"/>
<circle cx="73.8" cy="54.3" r="8.3" fill="#e0354f"/>
<text x="44.5" y="24.6" font-family="Liberation Sans" font-size="11" text-anchor="middle" fill="#0d2a4d">Z</text>
<text x="58.6" y="32" font-family="Liberation Sans" font-size="11" text-anchor="middle" fill="#1c2a08">Y</text>
<text x="73.8" y="58.3" font-family="Liberation Sans" font-size="11" text-anchor="middle" fill="#3d0a12">X</text>
</svg>
<div class="a" style="left:1575px;top:113px;width:10px;height:20px;background:#2e2e2e;border-radius:5px 0 0 5px"></div>
<svg class="a" style="left:1578px;top:118px;" width="6" height="10" viewBox="0 0 6 10"><polyline points="5,1 1,5 5,9" fill="none" stroke="#9a9a9a" stroke-width="1.1"/></svg>
<svg class="a" style="left:1549px;top:192px;" width="28" height="28" viewBox="0 0 28 28"><circle cx="14" cy="14" r="14" fill="#2d2d2d" fill-opacity="0.85"/></svg>
<svg class="a" style="left:1549px;top:221px;" width="28" height="28" viewBox="0 0 28 28"><circle cx="14" cy="14" r="14" fill="#2d2d2d" fill-opacity="0.85"/></svg>
<svg class="a" style="left:1549px;top:251px;" width="28" height="28" viewBox="0 0 28 28"><circle cx="14" cy="14" r="14" fill="#2d2d2d" fill-opacity="0.85"/></svg>
<svg class="a" style="left:1549px;top:281px;" width="28" height="28" viewBox="0 0 28 28"><circle cx="14" cy="14" r="14" fill="#2d2d2d" fill-opacity="0.85"/></svg>
<svg class="a" style="left:1549px;top:192px;" width="28" height="28" viewBox="0 0 28 28"><circle cx="15.3" cy="12.7" r="6.6" fill="#e6e6e6"/><path d="M15.3,9.3 V16.1 M11.9,12.7 H18.7" stroke="#2d2d2d" stroke-width="1.3"/><path d="M10.5,17.5 L7.8,20.6" stroke="#e6e6e6" stroke-width="2.2" stroke-linecap="round"/></svg>
<svg class="a" style="left:1549px;top:221px;" width="28" height="28" viewBox="0 0 28 28"><path d="M8,15.5 C9,14.8 10,15.2 11,16.5 L11.5,17 V9.5 Q11.5,8.2 12.6,8.2 Q13.7,8.2 13.7,9.5 V14 V7.3 Q13.7,6 14.8,6 Q15.9,6 15.9,7.3 V14 V7.8 Q15.9,6.6 17,6.6 Q18.1,6.6 18.1,7.8 V14.5 V9.8 Q18.1,8.7 19.1,8.7 Q20.1,8.7 20.1,9.8 V16.5 C20.1,20.5 17.8,22.5 14.8,22.5 C12,22.5 10.5,21 9,18.5 Z" fill="#e6e6e6"/><path d="M13.7,11 V15 M15.9,11 V15 M18.1,11 V15" stroke="#2d2d2d" stroke-width="0.6"/></svg>
<svg class="a" style="left:1549px;top:251px;" width="28" height="28" viewBox="0 0 28 28"><circle cx="10.5" cy="10" r="3.6" fill="#e6e6e6"/><circle cx="17.2" cy="9.8" r="3.4" fill="#e6e6e6"/><rect x="9.5" y="13.2" width="9.5" height="7.5" fill="#e6e6e6"/><path d="M19,16.5 L22.5,13.5 V20.5Z" fill="#e6e6e6"/><path d="M6.5,15 H9.5 V19 H6.5" fill="#e6e6e6"/><circle cx="10.5" cy="10" r="1" fill="#2d2d2d"/><circle cx="17.2" cy="9.8" r="1" fill="#2d2d2d"/></svg>
<svg class="a" style="left:1549px;top:281px;" width="28" height="28" viewBox="0 0 28 28"><path d="M10,8 H18 L21,21 H7Z M9,12 H19 M8,16.5 H20 M12,8 L11,21 M16,8 L17,21" fill="none" stroke="#e6e6e6" stroke-width="1.3"/></svg>
<div class="a" style="left:1588px;top:50px;width:331px;height:310px;background:#282828;border-radius:7px"></div>
<div class="a" style="left:1588px;top:96px;width:331px;height:20px;background:#2b2b2b"></div>
<div class="a" style="left:1588px;top:136px;width:331px;height:20px;background:#2b2b2b"></div>
<div class="a" style="left:1596px;top:52px;width:32px;height:20px;background:#282828;border:1px solid #424242;border-radius:4px;"></div>
<svg class="a" style="left:1599px;top:54px;" width="20" height="16" viewBox="0 0 20 16"><rect x="2" y="2" width="5" height="3" fill="#e6e6e6"/><path d="M3.5,5 V12.5 H6 M3.5,8.5 H6" fill="none" stroke="#cfcfcf" stroke-width="1"/>
<rect x="6" y="7" width="7" height="3" fill="#e6e6e6"/><rect x="6" y="11" width="7" height="3" fill="#e6e6e6"/></svg>
<svg class="a" style="left:1617px;top:60px;" width="9" height="6" viewBox="0 0 9 6"><polyline points="1,1 4.5,4.5 8,1" fill="none" stroke="#d0d0d0" stroke-width="1.2"/></svg>
<div class="a" style="left:1633px;top:52px;width:32px;height:20px;background:#282828;border:1px solid #424242;border-radius:4px;"></div>
<svg class="a" style="left:1636px;top:54px;" width="18" height="16" viewBox="0 0 18 16"><rect x="5" y="1.5" width="9" height="9" fill="none" stroke="#e0e0e0" stroke-width="1.1"/>
<path d="M6,10 L8.5,4 L10,7.5 L11,6 L13,10Z" fill="#e0e0e0"/><circle cx="12" cy="3.5" r="1" fill="#e0e0e0"/>
<path d="M3,3.5 V12.5 H12 M1,5.5 V14.5 H10" fill="none" stroke="#e0e0e0" stroke-width="1"/></svg>
<svg class="a" style="left:1655px;top:60px;" width="9" height="6" viewBox="0 0 9 6"><polyline points="1,1 4.5,4.5 8,1" fill="none" stroke="#d0d0d0" stroke-width="1.2"/></svg>
<div class="a" style="left:1688px;top:52px;width:110px;height:20px;background:#1d1d1d;border:1px solid #2c2c2c;border-radius:4px"></div>
<svg class="a" style="left:1692px;top:54px;" width="16" height="16" viewBox="0 0 16 16"><circle cx="9.5" cy="6" r="4.3" fill="none" stroke="#e0e0e0" stroke-width="1.2"/><path d="M6.5,9 L2,13.5" stroke="#e0e0e0" stroke-width="1.2"/></svg>
<div class="a" style="left:1855px;top:52px;width:33px;height:20px;background:#282828;border:1px solid #424242;border-radius:4px;"></div>
<svg class="a" style="left:1857px;top:54px;" width="18" height="16" viewBox="0 0 18 16"><path d="M1.3,2.8 H15.2 L9.7,8.6 V13 L7.1,15.2 V8.6Z" fill="none" stroke="#e6e6e6" stroke-width="1.2" stroke-linejoin="round"/></svg>
<svg class="a" style="left:1877px;top:60px;" width="9" height="6" viewBox="0 0 9 6"><polyline points="1,1 4.5,4.5 8,1" fill="none" stroke="#d0d0d0" stroke-width="1.2"/></svg>
<div class="a" style="left:1892px;top:52px;width:20px;height:20px;background:#4a4a4a;border:1px solid #4a4a4a;border-radius:4px;"></div>
<svg class="a" style="left:1894px;top:54px;" width="16" height="16" viewBox="0 0 16 16"><path d="M6.5,3.6 H1.8 V6.3 H6.5 M3,6.3 V12.6 H11.8 V8.5" fill="none" stroke="#dcdcdc" stroke-width="1.1"/><rect x="5" y="8" width="2.6" height="1.3" fill="#dcdcdc"/>
<circle cx="11.5" cy="3.8" r="3.3" fill="#f0f0f0"/><path d="M11.5,1.8 V5.8 M9.5,3.8 H13.5" stroke="#333" stroke-width="1.1"/></svg>
<svg class="a" style="left:1611px;top:80px;" width="14" height="14" viewBox="0 0 14 14"><rect x="0.5" y="1" width="13" height="3" fill="#e0e0e0"/><rect x="1.5" y="5" width="11" height="8" fill="#e0e0e0"/><rect x="5" y="7" width="4" height="1.6" fill="#282828"/></svg>
<div class="t" style="left:1632px;top:81px;color:#d9d9d9;font-size:11px;">Scene Collection</div>
<svg class="a" style="left:1613px;top:103px;" width="8" height="7" viewBox="0 0 8 7"><path d="M0.5,0.5 H7.5 L4,6.5Z" fill="#bdbdbd"/></svg>
<div class="a" style="left:1628px;top:97px;width:20px;height:18px;background:#4a4a4a;border:1px solid #5a5a5a;border-radius:4px"></div>
<svg class="a" style="left:1631px;top:100px;" width="14" height="14" viewBox="0 0 14 14"><rect x="0.5" y="1" width="13" height="3" fill="#e0e0e0"/><rect x="1.5" y="5" width="11" height="8" fill="#e0e0e0"/><rect x="5" y="7" width="4" height="1.6" fill="#4a4a4a"/></svg>
<div class="t" style="left:1652px;top:101px;color:#d9d9d9;font-size:11px;">Collection</div>
<div class="a" style="left:1617px;top:121px;width:1px;height:50px;background:#5a5a5a"></div>
<svg class="a" style="left:1636px;top:122px;" width="7" height="8" viewBox="0 0 7 8"><path d="M0.5,0.5 V7.5 L6.5,4Z" fill="#bdbdbd"/></svg>
<svg class="a" style="left:1636px;top:142px;" width="7" height="8" viewBox="0 0 7 8"><path d="M0.5,0.5 V7.5 L6.5,4Z" fill="#bdbdbd"/></svg>
<svg class="a" style="left:1636px;top:162px;" width="7" height="8" viewBox="0 0 7 8"><path d="M0.5,0.5 V7.5 L6.5,4Z" fill="#bdbdbd"/></svg>
<svg class="a" style="left:1650px;top:118px;" width="16" height="16" viewBox="0 0 16 16"><circle cx="4.5" cy="4.5" r="3.5" fill="#e9963d"/><circle cx="10.5" cy="4.5" r="3.5" fill="#e9963d"/><circle cx="4.5" cy="4.5" r="1" fill="#282828"/><circle cx="10.5" cy="4.5" r="1" fill="#282828"/>
<rect x="3" y="9" width="8" height="5" fill="#e9963d"/><path d="M11,11.5 L15,9 V14Z M0,10 H3 V13 H0Z" fill="#e9963d"/></svg>
<div class="t" style="left:1672px;top:121px;color:#d9d9d9;font-size:11px;">Camera</div>
<div class="a" style="left:1731px;top:117px;width:20px;height:18px;background:#4a4a4a;border:1px solid #5a5a5a;border-radius:4px"></div>
<svg class="a" style="left:1733px;top:119px;" width="16" height="14" viewBox="0 0 16 14"><path d="M2,6 C1,2 5,1 7,3 C9,0 14,1 14,5 C14,7 12,7 12,7 H3Z" fill="none" stroke="#29c2a0" stroke-width="1.1"/><circle cx="11" cy="4" r="1" fill="none" stroke="#29c2a0" stroke-width="0.9"/>
<rect x="4" y="9" width="7" height="4" fill="none" stroke="#29c2a0" stroke-width="1.1"/><path d="M11,11 L15,9 V13Z M1,9.5 V12.5" fill="none" stroke="#29c2a0" stroke-width="1.1"/></svg>
<div class="a" style="left:1648px;top:137px;width:20px;height:18px;background:#4a4a4a;border:1px solid #5a5a5a;border-radius:4px"></div>
<svg class="a" style="left:1651px;top:139px;" width="14" height="14" viewBox="0 0 14 14"><path d="M1,1 H13 L7,13Z" fill="#e9963d"/><path d="M4.5,3.5 H9.5 L7,8Z" fill="#4a4a4a"/></svg>
<div class="t" style="left:1672px;top:141px;color:#d9d9d9;font-size:11px;">Cube</div>
<svg class="a" style="left:1719px;top:138px;" width="16" height="16" viewBox="0 0 16 16"><path d="M3,3 H13 L8,13Z" fill="none" stroke="#29c2a0" stroke-width="1.1"/>
<rect x="1" y="1" width="3.5" height="3.5" fill="#282828" stroke="#29c2a0" stroke-width="1"/><rect x="11.5" y="1" width="3.5" height="3.5" fill="#282828" stroke="#29c2a0" stroke-width="1"/><rect x="6.2" y="11.5" width="3.5" height="3.5" fill="#282828" stroke="#29c2a0" stroke-width="1"/></svg>
<svg class="a" style="left:1651px;top:158px;" width="14" height="16" viewBox="0 0 14 16"><circle cx="7" cy="6" r="5.6" fill="#e9963d"/><path d="M4.5,12 H9.5 M5,14 H9" stroke="#e9963d" stroke-width="1.3"/><path d="M4.5,5 L5.5,7 H8.5 L9.5,5 M5.5,7 V10 M8.5,7 V10" fill="none" stroke="#282828" stroke-width="1"/></svg>
<div class="t" style="left:1672px;top:161px;color:#d9d9d9;font-size:11px;">Light</div>
<svg class="a" style="left:1719px;top:159px;" width="14" height="16" viewBox="0 0 14 16"><path d="M3,11 A5.8,5.8 0 1 1 11,11" fill="none" stroke="#29c2a0" stroke-width="1.1"/><circle cx="7" cy="7" r="1.3" fill="none" stroke="#29c2a0" stroke-width="1"/><path d="M7,9 V11 M7,12.5 V14.5" stroke="#29c2a0" stroke-width="1.1"/></svg>
<svg class="a" style="left:1854px;top:100px;" width="12" height="12" viewBox="0 0 12 12"><rect x="1" y="1" width="10.4" height="10" rx="0.5" fill="#e6e6e6"/><path d="M2.6,6.2 L4.8,8.4 L9.6,3.5" fill="none" stroke="#222" stroke-width="1.9"/></svg>
<svg class="a" style="left:1873px;top:101px;" width="14" height="10" viewBox="0 0 14 10"><path d="M0.3,4.8 C3,0.2 11,0.2 13.7,4.8 C11,9.4 3,9.4 0.3,4.8Z" fill="#e6e6e6"/><circle cx="7" cy="4.8" r="2.4" fill="none" stroke="#282828" stroke-width="1.1"/><circle cx="7" cy="4.8" r="0.9" fill="#282828"/></svg>
<svg class="a" style="left:1893px;top:101px;" width="14" height="12" viewBox="0 0 14 12"><path d="M0.5,2.5 H3.8 L4.8,0.8 H9.2 L10.2,2.5 H13.5 V11.5 H0.5Z" fill="#e6e6e6"/><circle cx="7" cy="6.8" r="3.1" fill="none" stroke="#282828" stroke-width="1"/><circle cx="7" cy="6.8" r="1.6" fill="#282828"/></svg>
<svg class="a" style="left:1873px;top:121px;" width="14" height="10" viewBox="0 0 14 10"><path d="M0.3,4.8 C3,0.2 11,0.2 13.7,4.8 C11,9.4 3,9.4 0.3,4.8Z" fill="#e6e6e6"/><circle cx="7" cy="4.8" r="2.4" fill="none" stroke="#282828" stroke-width="1.1"/><circle cx="7" cy="4.8" r="0.9" fill="#282828"/></svg>
<svg class="a" style="left:1893px;top:121px;" width="14" height="12" viewBox="0 0 14 12"><path d="M0.5,2.5 H3.8 L4.8,0.8 H9.2 L10.2,2.5 H13.5 V11.5 H0.5Z" fill="#e6e6e6"/><circle cx="7" cy="6.8" r="3.1" fill="none" stroke="#282828" stroke-width="1"/><circle cx="7" cy="6.8" r="1.6" fill="#282828"/></svg>
<svg class="a" style="left:1873px;top:141px;" width="14" height="10" viewBox="0 0 14 10"><path d="M0.3,4.8 C3,0.2 11,0.2 13.7,4.8 C11,9.4 3,9.4 0.3,4.8Z" fill="#e6e6e6"/><circle cx="7" cy="4.8" r="2.4" fill="none" stroke="#282828" stroke-width="1.1"/><circle cx="7" cy="4.8" r="0.9" fill="#282828"/></svg>
<svg class="a" style="left:1893px;top:141px;" width="14" height="12" viewBox="0 0 14 12"><path d="M0.5,2.5 H3.8 L4.8,0.8 H9.2 L10.2,2.5 H13.5 V11.5 H0.5Z" fill="#e6e6e6"/><circle cx="7" cy="6.8" r="3.1" fill="none" stroke="#282828" stroke-width="1"/><circle cx="7" cy="6.8" r="1.6" fill="#282828"/></svg>
<svg class="a" style="left:1873px;top:161px;" width="14" height="10" viewBox="0 0 14 10"><path d="M0.3,4.8 C3,0.2 11,0.2 13.7,4.8 C11,9.4 3,9.4 0.3,4.8Z" fill="#e6e6e6"/><circle cx="7" cy="4.8" r="2.4" fill="none" stroke="#282828" stroke-width="1.1"/><circle cx="7" cy="4.8" r="0.9" fill="#282828"/></svg>
<svg class="a" style="left:1893px;top:161px;" width="14" height="12" viewBox="0 0 14 12"><path d="M0.5,2.5 H3.8 L4.8,0.8 H9.2 L10.2,2.5 H13.5 V11.5 H0.5Z" fill="#e6e6e6"/><circle cx="7" cy="6.8" r="3.1" fill="none" stroke="#282828" stroke-width="1"/><circle cx="7" cy="6.8" r="1.6" fill="#282828"/></svg>
<div class="a" style="left:1588px;top:363px;width:331px;height:654px;background:#303030;border-radius:7px 7px 7px 7px;overflow:hidden"></div>
<div class="a" style="left:1588px;top:388px;width:28px;height:629px;background:#1d1d1d;border-radius:0 0 0 7px"></div>
<div class="a" style="left:1596px;top:365px;width:32px;height:20px;background:#282828;border:1px solid #424242;border-radius:4px;"></div>
<svg class="a" style="left:1599px;top:367px;" width="17" height="16" viewBox="0 0 17 16"><rect x="1.9" y="1" width="14.1" height="5.9" rx="2.95" fill="#e6e6e6"/><path d="M8.1,2.4 H12.2 Q14.4,2.4 14.4,3.95 Q14.4,5.5 12.2,5.5 H8.1Z" fill="#282828"/><rect x="1.9" y="8.9" width="14.1" height="6.2" rx="3.1" fill="#e6e6e6"/><path d="M11,10.4 H12 Q14.4,10.4 14.4,12 Q14.4,13.6 12,13.6 H11Z" fill="#282828"/></svg>
<svg class="a" style="left:1617px;top:374px;" width="9" height="6" viewBox="0 0 9 6"><polyline points="1,1 4.5,4.5 8,1" fill="none" stroke="#d0d0d0" stroke-width="1.2"/></svg>
<div class="a" style="left:1700px;top:365px;width:110px;height:20px;background:#1d1d1d;border:1px solid #2c2c2c;border-radius:4px"></div>
<svg class="a" style="left:1704px;top:367px;" width="16" height="16" viewBox="0 0 16 16"><circle cx="9.5" cy="6" r="4.3" fill="none" stroke="#e0e0e0" stroke-width="1.2"/><path d="M6.5,9 L2,13.5" stroke="#e0e0e0" stroke-width="1.2"/></svg>
<div class="a" style="left:1893px;top:365px;width:19px;height:20px;background:#282828;border:1px solid #424242;border-radius:4px;"></div>
<svg class="a" style="left:1898px;top:374px;" width="9" height="6" viewBox="0 0 9 6"><polyline points="1,1 4.5,4.5 8,1" fill="none" stroke="#d0d0d0" stroke-width="1.2"/></svg>
<div class="a" style="left:1590px;top:645px;width:26px;height:26px;background:#303030;border-radius:4px 0 0 4px"></div>
<div class="a" style="left:1592px;top:424px;width:24px;height:1px;background:#282828"></div>
<div class="a" style="left:1592px;top:572px;width:24px;height:1px;background:#282828"></div>
<div class="a" style="left:1592px;top:608px;width:24px;height:1px;background:#282828"></div>
<div class="a" style="left:1592px;top:812px;width:24px;height:1px;background:#282828"></div>
<svg class="a" style="left:1595px;top:402px;" width="16" height="16" viewBox="0 0 16 16"><path d="M3.4,1 V8" stroke="#bdbdbd" stroke-width="1.3"/><ellipse cx="3.4" cy="11.7" rx="2.9" ry="3.1" fill="#bdbdbd"/>
<path d="M8.7,1 V3.2 C8.7,5.5 10,6.5 11.6,6.5 C13.2,6.5 14.6,5.5 14.6,3.2 V1" fill="none" stroke="#bdbdbd" stroke-width="1.7"/><path d="M11.6,6 V14" stroke="#bdbdbd" stroke-width="2.2" stroke-linecap="round"/><circle cx="11.6" cy="13.3" r="0.6" fill="#1d1d1d"/></svg>
<svg class="a" style="left:1595px;top:437px;" width="16" height="16" viewBox="0 0 16 16"><rect x="1.6" y="4.6" width="12.8" height="9.6" rx="1" fill="none" stroke="#bdbdbd" stroke-width="1.3"/><rect x="5.5" y="2.6" width="4" height="2.3" fill="none" stroke="#bdbdbd" stroke-width="1.1"/><path d="M12,2.3 H13.6" stroke="#bdbdbd" stroke-width="1"/>
<path d="M3.5,7 H10 M3.5,9.3 H10 M3.5,11.6 H10" stroke="#bdbdbd" stroke-width="0.9"/><path d="M11,6.5 V11.8" stroke="#bdbdbd" stroke-width="0.8"/><rect x="11.8" y="6.8" width="1.6" height="1.6" fill="#bdbdbd"/><rect x="11.8" y="10.2" width="1.6" height="1.6" fill="#bdbdbd"/></svg>
<svg class="a" style="left:1595px;top:465px;" width="16" height="16" viewBox="0 0 16 16"><path d="M1,6.5 V3 Q1,2 2,2 H14 Q15,2 15,3 V6.5 H13 V5.5 H3 V6.5Z" fill="#bdbdbd"/><rect x="4" y="5" width="8" height="10" fill="#8a8a8a"/><path d="M5.5,13.5 L8,10.5 L10.5,13.5Z" fill="#1d1d1d"/><rect x="10" y="6.5" width="1.2" height="1.2" fill="#1d1d1d"/></svg>
<svg class="a" style="left:1595px;top:494px;" width="16" height="16" viewBox="0 0 16 16"><rect x="5" y="1.5" width="9.5" height="9.5" fill="none" stroke="#bdbdbd" stroke-width="1.1"/>
<path d="M6,10.5 L8.8,4.5 L10.4,8 L11.5,6.8 L13.8,10.5Z" fill="#bdbdbd"/><rect x="11.8" y="3" width="1.4" height="1.4" fill="#bdbdbd"/><path d="M3.2,3.5 V13 H12.5 M1.2,5.5 V15 H10.5" fill="none" stroke="#bdbdbd" stroke-width="1"/></svg>
<svg class="a" style="left:1595px;top:522px;" width="16" height="16" viewBox="0 0 16 16"><path d="M4.8,1 L1,11 Q1,12.5 3,12.5 H6.6 Q5.5,9 8,7.3Z" fill="#bdbdbd"/>
<circle cx="12.2" cy="3.5" r="2" fill="#bdbdbd"/><circle cx="10.3" cy="10.3" r="3.6" fill="none" stroke="#bdbdbd" stroke-width="1.1"/><path d="M9,9.5 L10,8.6" stroke="#bdbdbd" stroke-width="0.9"/></svg>
<svg class="a" style="left:1595px;top:550px;" width="16" height="16" viewBox="0 0 16 16"><circle cx="8" cy="7.8" r="6.3" fill="none" stroke="#c05a5f" stroke-width="1.2"/>
<path d="M3.5,4.2 C5,2.5 7,2 8.5,2.5 C8,4 6.5,4.5 6.8,6 C7.2,7.5 5.5,8 4.5,7 Z M7.5,8.3 C9,8 11.5,9 11,11.5 C10.5,13 9,13.5 8.5,12 C8,11 7,10 7.5,8.3Z" fill="#c05a5f"/>
<path d="M0.6,15 L2.8,12.7 M13.3,3 L15,1.2" stroke="#c05a5f" stroke-width="1.1"/></svg>
<svg class="a" style="left:1595px;top:587px;" width="16" height="16" viewBox="0 0 16 16"><rect x="0.8" y="1.5" width="14" height="3" fill="none" stroke="#e6e6e6" stroke-width="1.1"/><path d="M2,5.5 V13.8 H13.6 V5.5" fill="none" stroke="#e6e6e6" stroke-width="1.1"/><rect x="6.3" y="7.3" width="3" height="1.5" fill="#e6e6e6"/></svg>
<svg class="a" style="left:1595px;top:622px;" width="16" height="16" viewBox="0 0 16 16"><rect x="3.7" y="3.7" width="8.6" height="8.6" fill="#c8884d"/><path d="M1,4 V1 H4 M12,1 H15 V4 M15,12 V15 H12 M4,15 H1 V12" fill="none" stroke="#a8764a" stroke-width="1"/></svg>
<svg class="a" style="left:1595px;top:650px;" width="16" height="16" viewBox="0 0 16 16"><path d="M2.6,13.6 L7,9.2" stroke="#6a9ff0" stroke-width="2.8" stroke-linecap="round"/><path d="M12.3,1.8 A4.3,4.3 0 1 0 14.3,4.5 L11.8,6.2 L10.2,4.4Z" fill="#6a9ff0"/></svg>
<svg class="a" style="left:1595px;top:678px;" width="16" height="16" viewBox="0 0 16 16"><path d="M3.4,3.6 H13.7 M3.4,3.6 V13.3 M3.4,3.6 L12.9,13.3" stroke="#5b87d6" stroke-width="1"/><circle cx="3.4" cy="3.6" r="2.6" fill="#5b87d6"/><circle cx="13.7" cy="3.6" r="1.4" fill="#5b87d6"/><circle cx="3.4" cy="13.3" r="1.5" fill="#5b87d6"/><circle cx="12.9" cy="13.3" r="2" fill="#5b87d6"/></svg>
<svg class="a" style="left:1595px;top:706px;" width="16" height="16" viewBox="0 0 16 16"><path d="M10.5,2 A6.3,6.3 0 1 0 13.7,11.5" fill="none" stroke="#5b87d6" stroke-width="1.1"/><circle cx="8" cy="8.6" r="2.8" fill="#5b87d6"/><circle cx="13.2" cy="2.6" r="1.8" fill="#5b87d6"/></svg>
<svg class="a" style="left:1595px;top:734px;" width="16" height="16" viewBox="0 0 16 16"><path d="M2.5,12.5 C0.5,10 2,6.5 5,4.5 C8,2.5 11,1 13.5,2 C15,3 14,6 12.5,8.5 C10.5,11.5 8,14 5.5,14 C4.3,14 3.3,13.5 2.5,12.5Z" fill="none" stroke="#5b87d6" stroke-width="1.1"/><circle cx="6.6" cy="9.6" r="2.6" fill="none" stroke="#6a9ff0" stroke-width="1.5"/><circle cx="12" cy="3.8" r="1" fill="#5b87d6"/></svg>
<svg class="a" style="left:1595px;top:757px;" width="16" height="20" viewBox="0 0 16 20"><path d="M3,7.8 H13 L7.8,17.9Z" fill="none" stroke="#29c29a" stroke-width="1.1"/><rect x="1.2" y="6" width="3.6" height="3.6" fill="#1d1d1d" stroke="#29c29a" stroke-width="1.1"/><rect x="11.2" y="6" width="3.6" height="3.6" fill="#1d1d1d" stroke="#29c29a" stroke-width="1.1"/><rect x="6" y="16.1" width="3.6" height="3.6" fill="#1d1d1d" stroke="#29c29a" stroke-width="1.1"/></svg>
<svg class="a" style="left:1595px;top:790px;" width="16" height="16" viewBox="0 0 16 16"><circle cx="7.8" cy="7.9" r="6.6" fill="#c05a5f"/><path d="M7.8,1.3 V7.9 H14.4 A6.6,6.6 0 0 0 7.8,1.3Z M7.8,7.9 V14.5 A6.6,6.6 0 0 1 1.2,7.9Z" fill="#1d1d1d"/><circle cx="7.8" cy="7.9" r="6.6" fill="none" stroke="#c05a5f" stroke-width="1"/></svg>
<svg class="a" style="left:1595px;top:826px;" width="16" height="16" viewBox="0 0 16 16"><rect x="1" y="1.4" width="13.8" height="13.8" fill="#c05a5f"/><rect x="3.76" y="1.40" width="2.76" height="2.76" fill="#1d1d1d"/><rect x="9.28" y="1.40" width="2.76" height="2.76" fill="#1d1d1d"/><rect x="1.00" y="4.16" width="2.76" height="2.76" fill="#1d1d1d"/><rect x="6.52" y="4.16" width="2.76" height="2.76" fill="#1d1d1d"/><rect x="12.04" y="4.16" width="2.76" height="2.76" fill="#1d1d1d"/><rect x="3.76" y="6.92" width="2.76" height="2.76" fill="#1d1d1d"/><rect x="9.28" y="6.92" width="2.76" height="2.76" fill="#1d1d1d"/><rect x="1.00" y="9.68" width="2.76" height="2.76" fill="#1d1d1d"/><rect x="6.52" y="9.68" width="2.76" height="2.76" fill="#1d1d1d"/><rect x="12.04" y="9.68" width="2.76" height="2.76" fill="#1d1d1d"/><rect x="3.76" y="12.44" width="2.76" height="2.76" fill="#1d1d1d"/><rect x="9.28" y="12.44" width="2.76" height="2.76" fill="#1d1d1d"/></svg>
<svg class="a" style="left:1627px;top:399px;" width="14" height="14" viewBox="0 0 14 14"><rect x="3.5" y="3.5" width="7" height="7" fill="#e6e6e6"/><path d="M0.5,3.5 V0.5 H3.5 M10.5,0.5 H13.5 V3.5 M13.5,10.5 V13.5 H10.5 M3.5,13.5 H0.5 V10.5" fill="none" stroke="#bcbcbc" stroke-width="1"/></svg>
<div class="t" style="left:1650px;top:400px;color:#e6e6e6;font-size:11px;">Cube</div>
<svg class="a" style="left:1896px;top:399px;" width="14" height="14" viewBox="0 0 14 14"><path d="M1,13 L5,9 M3,7 L7,11 M5,5 L9,1 L13,5 L9,9Z" stroke="#a0a0a0" stroke-width="1.1" fill="none"/></svg>
<div class="a" style="left:1625px;top:432px;width:287px;height:20px;background:#282828;border:1px solid #424242;border-radius:4px;"></div>
<div class="t" style="left:1632px;top:436px;color:#e6e6e6;font-size:11px;">Add Modifier</div>
<svg class="a" style="left:1898px;top:441px;" width="9" height="6" viewBox="0 0 9 6"><polyline points="1,1 4.5,4.5 8,1" fill="none" stroke="#d0d0d0" stroke-width="1.2"/></svg>
<div class="a" style="left:1px;top:947px;width:1584px;height:70px;background:#303030;border-radius:7px 7px 0 0"></div>
<div class="a" style="left:1px;top:972px;width:1584px;height:23px;background:#1d1d1d"></div>
<div class="a" style="left:1px;top:995px;width:1584px;height:22px;background:#2e2e2e"></div>
<div class="a" style="left:1px;top:995px;width:53px;height:22px;background:#212121"></div>
<div class="a" style="left:1527px;top:995px;width:58px;height:22px;background:#212121"></div>
<div class="a" style="left:8px;top:950px;width:32px;height:20px;background:#282828;border:1px solid #424242;border-radius:4px;"></div>
<svg class="a" style="left:11px;top:952px;" width="18" height="16" viewBox="0 0 18 16"><circle cx="9" cy="8" r="7" fill="#e6e6e6"/><polyline points="11,3.5 6.5,8 11,12.5" fill="none" stroke="#282828" stroke-width="1.6"/></svg>
<svg class="a" style="left:30px;top:959px;" width="9" height="6" viewBox="0 0 9 6"><polyline points="1,1 4.5,4.5 8,1" fill="none" stroke="#d0d0d0" stroke-width="1.2"/></svg>
<div class="a" style="left:45px;top:950px;width:129px;height:20px;background:#282828;border:1px solid #424242;border-radius:4px;"></div>
<div class="a" style="left:114px;top:951px;width:1px;height:18px;background:#1d1d1d"></div>
<div class="t" style="left:53px;top:954px;color:#e6e6e6;font-size:11px;">Playback</div>
<svg class="a" style="left:104px;top:959px;" width="9" height="6" viewBox="0 0 9 6"><polyline points="1,1 4.5,4.5 8,1" fill="none" stroke="#d0d0d0" stroke-width="1.2"/></svg>
<div class="t" style="left:122px;top:954px;color:#e6e6e6;font-size:11px;">Keying</div>
<svg class="a" style="left:164px;top:959px;" width="9" height="6" viewBox="0 0 9 6"><polyline points="1,1 4.5,4.5 8,1" fill="none" stroke="#d0d0d0" stroke-width="1.2"/></svg>
<div class="t" style="left:183px;top:954px;color:#e6e6e6;font-size:11px;">View</div>
<div class="t" style="left:223px;top:954px;color:#e6e6e6;font-size:11px;">Marker</div>
<div class="a" style="left:700px;top:950px;width:39px;height:20px;background:#282828;border:1px solid #424242;border-radius:4px;"></div>
<div class="a" style="left:701px;top:951px;width:18px;height:18px;background:#545454;border-radius:3px 0 0 3px"></div>
<svg class="a" style="left:705px;top:955px;" width="10" height="10" viewBox="0 0 10 10"><circle cx="5" cy="5" r="4" fill="#e6e6e6"/></svg>
<svg class="a" style="left:724px;top:959px;" width="9" height="6" viewBox="0 0 9 6"><polyline points="1,1 4.5,4.5 8,1" fill="none" stroke="#777" stroke-width="1.2"/></svg>
<div class="a" style="left:745px;top:950px;width:119px;height:20px;background:#545454;border:1px solid #3d3d3d;border-radius:4px;"></div>
<div class="a" style="left:765px;top:951px;width:1px;height:18px;background:#3f3f3f"></div>
<div class="a" style="left:784px;top:951px;width:1px;height:18px;background:#3f3f3f"></div>
<div class="a" style="left:804px;top:951px;width:1px;height:18px;background:#3f3f3f"></div>
<div class="a" style="left:824px;top:951px;width:1px;height:18px;background:#3f3f3f"></div>
<div class="a" style="left:843px;top:951px;width:1px;height:18px;background:#3f3f3f"></div>
<svg class="a" style="left:745px;top:950px;" width="119" height="20" viewBox="0 0 119 20">
<path d="M9,5 V15 M18,5 V15 L11,10Z" fill="#e6e6e6" stroke="#e6e6e6" stroke-width="1.2"/>
<path d="M27,10 L31,6 L35,10 L31,14Z M36,10 L41,6 V14Z" fill="#e6e6e6"/>
<path d="M55,5 V15 L47,10Z" fill="#e6e6e6"/>
<path d="M66,5 V15 L75,10Z" fill="#e6e6e6"/>
<path d="M86,6 L91,10 L86,14Z M92,10 L96,6 L100,10 L96,14Z" fill="#e6e6e6"/>
<path d="M106,5 V15 L113,10Z M114,5 V15" fill="#e6e6e6" stroke="#e6e6e6" stroke-width="1.2"/></svg>
<div class="a" style="left:1308px;top:951px;width:73px;height:19px;background:#545454;border-radius:4px"></div>
<div class="t" style="left:1244px;width:200px;text-align:center;top:955px;color:#e6e6e6;font-size:11px;">1</div>
<div class="a" style="left:1388px;top:951px;width:191px;height:19px;background:#545454;border-radius:4px"></div>
<div class="a" style="left:1406px;top:951px;width:1px;height:19px;background:#3f3f3f"></div>
<div class="a" style="left:1494px;top:951px;width:1px;height:19px;background:#3f3f3f"></div>
<svg class="a" style="left:1389px;top:952px;" width="17" height="17" viewBox="0 0 17 17"><circle cx="8" cy="10" r="5.5" fill="none" stroke="#e6e6e6" stroke-width="1.2"/><path d="M8,7 V10 H10.5 M6,2.5 H10 M8,2.5 V4.5 M13,4 L12,5" fill="none" stroke="#e6e6e6" stroke-width="1.1"/></svg>
<div class="t" style="left:1422px;top:955px;color:#e6e6e6;font-size:11px;">Start</div>
<div class="t" style="left:1474px;top:955px;color:#e6e6e6;font-size:11px;">1</div>
<div class="t" style="left:1510px;top:955px;color:#e6e6e6;font-size:11px;">End</div>
<div class="t" style="left:1544px;top:955px;color:#e6e6e6;font-size:11px;">250</div>
<div class="t" style="left:13px;width:200px;text-align:center;top:978px;color:#c8c8c8;font-size:11px;letter-spacing:0.9px">10</div>
<div class="t" style="left:72px;width:200px;text-align:center;top:978px;color:#c8c8c8;font-size:11px;letter-spacing:0.9px">20</div>
<div class="t" style="left:131px;width:200px;text-align:center;top:978px;color:#c8c8c8;font-size:11px;letter-spacing:0.9px">30</div>
<div class="t" style="left:190px;width:200px;text-align:center;top:978px;color:#c8c8c8;font-size:11px;letter-spacing:0.9px">40</div>
<div class="t" style="left:249px;width:200px;text-align:center;top:978px;color:#c8c8c8;font-size:11px;letter-spacing:0.9px">50</div>
<div class="t" style="left:308px;width:200px;text-align:center;top:978px;color:#c8c8c8;font-size:11px;letter-spacing:0.9px">60</div>
<div class="t" style="left:367px;width:200px;text-align:center;top:978px;color:#c8c8c8;font-size:11px;letter-spacing:0.9px">70</div>
<div class="t" style="left:425px;width:200px;text-align:center;top:978px;color:#c8c8c8;font-size:11px;letter-spacing:0.9px">80</div>
<div class="t" style="left:484px;width:200px;text-align:center;top:978px;color:#c8c8c8;font-size:11px;letter-spacing:0.9px">90</div>
<div class="t" style="left:543px;width:200px;text-align:center;top:978px;color:#c8c8c8;font-size:11px;letter-spacing:0.9px">100</div>
<div class="t" style="left:602px;width:200px;text-align:center;top:978px;color:#c8c8c8;font-size:11px;letter-spacing:0.9px">110</div>
<div class="t" style="left:661px;width:200px;text-align:center;top:978px;color:#c8c8c8;font-size:11px;letter-spacing:0.9px">120</div>
<div class="t" style="left:720px;width:200px;text-align:center;top:978px;color:#c8c8c8;font-size:11px;letter-spacing:0.9px">130</div>
<div class="t" style="left:779px;width:200px;text-align:center;top:978px;color:#c8c8c8;font-size:11px;letter-spacing:0.9px">140</div>
<div class="t" style="left:838px;width:200px;text-align:center;top:978px;color:#c8c8c8;font-size:11px;letter-spacing:0.9px">150</div>
<div class="t" style="left:897px;width:200px;text-align:center;top:978px;color:#c8c8c8;font-size:11px;letter-spacing:0.9px">160</div>
<div class="t" style="left:956px;width:200px;text-align:center;top:978px;color:#c8c8c8;font-size:11px;letter-spacing:0.9px">170</div>
<div class="t" style="left:1015px;width:200px;text-align:center;top:978px;color:#c8c8c8;font-size:11px;letter-spacing:0.9px">180</div>
<div class="t" style="left:1074px;width:200px;text-align:center;top:978px;color:#c8c8c8;font-size:11px;letter-spacing:0.9px">190</div>
<div class="t" style="left:1133px;width:200px;text-align:center;top:978px;color:#c8c8c8;font-size:11px;letter-spacing:0.9px">200</div>
<div class="t" style="left:1192px;width:200px;text-align:center;top:978px;color:#c8c8c8;font-size:11px;letter-spacing:0.9px">210</div>
<div class="t" style="left:1251px;width:200px;text-align:center;top:978px;color:#c8c8c8;font-size:11px;letter-spacing:0.9px">220</div>
<div class="t" style="left:1310px;width:200px;text-align:center;top:978px;color:#c8c8c8;font-size:11px;letter-spacing:0.9px">230</div>
<div class="t" style="left:1369px;width:200px;text-align:center;top:978px;color:#c8c8c8;font-size:11px;letter-spacing:0.9px">240</div>
<div class="t" style="left:1428px;width:200px;text-align:center;top:978px;color:#c8c8c8;font-size:11px;letter-spacing:0.9px">250</div>
<div class="a" style="left:23px;top:995px;width:1px;height:14px;background:#262626"></div>
<div class="a" style="left:53px;top:995px;width:1px;height:14px;background:#1c1c1c"></div>
<div class="a" style="left:82px;top:995px;width:1px;height:14px;background:#262626"></div>
<div class="a" style="left:112px;top:995px;width:1px;height:14px;background:#1c1c1c"></div>
<div class="a" style="left:141px;top:995px;width:1px;height:14px;background:#262626"></div>
<div class="a" style="left:171px;top:995px;width:1px;height:14px;background:#1c1c1c"></div>
<div class="a" style="left:200px;top:995px;width:1px;height:14px;background:#262626"></div>
<div class="a" style="left:230px;top:995px;width:1px;height:14px;background:#1c1c1c"></div>
<div class="a" style="left:259px;top:995px;width:1px;height:14px;background:#262626"></div>
<div class="a" style="left:289px;top:995px;width:1px;height:14px;background:#1c1c1c"></div>
<div class="a" style="left:318px;top:995px;width:1px;height:14px;background:#262626"></div>
<div class="a" style="left:348px;top:995px;width:1px;height:14px;background:#1c1c1c"></div>
<div class="a" style="left:377px;top:995px;width:1px;height:14px;background:#262626"></div>
<div class="a" style="left:407px;top:995px;width:1px;height:14px;background:#1c1c1c"></div>
<div class="a" style="left:436px;top:995px;width:1px;height:14px;background:#262626"></div>
<div class="a" style="left:466px;top:995px;width:1px;height:14px;background:#1c1c1c"></div>
<div class="a" style="left:495px;top:995px;width:1px;height:14px;background:#262626"></div>
<div class="a" style="left:524px;top:995px;width:1px;height:14px;background:#1c1c1c"></div>
<div class="a" style="left:554px;top:995px;width:1px;height:14px;background:#262626"></div>
<div class="a" style="left:583px;top:995px;width:1px;height:14px;background:#1c1c1c"></div>
<div class="a" style="left:613px;top:995px;width:1px;height:14px;background:#262626"></div>
<div class="a" style="left:642px;top:995px;width:1px;height:14px;background:#1c1c1c"></div>
<div class="a" style="left:672px;top:995px;width:1px;height:14px;background:#262626"></div>
<div class="a" style="left:701px;top:995px;width:1px;height:14px;background:#1c1c1c"></div>
<div class="a" style="left:731px;top:995px;width:1px;height:14px;background:#262626"></div>
<div class="a" style="left:760px;top:995px;width:1px;height:14px;background:#1c1c1c"></div>
<div class="a" style="left:790px;top:995px;width:1px;height:14px;background:#262626"></div>
<div class="a" style="left:819px;top:995px;width:1px;height:14px;background:#1c1c1c"></div>
<div class="a" style="left:849px;top:995px;width:1px;height:14px;background:#262626"></div>
<div class="a" style="left:878px;top:995px;width:1px;height:14px;background:#1c1c1c"></div>
<div class="a" style="left:908px;top:995px;width:1px;height:14px;background:#262626"></div>
<div class="a" style="left:937px;top:995px;width:1px;height:14px;background:#1c1c1c"></div>
<div class="a" style="left:967px;top:995px;width:1px;height:14px;background:#262626"></div>
<div class="a" style="left:996px;top:995px;width:1px;height:14px;background:#1c1c1c"></div>
<div class="a" style="left:1026px;top:995px;width:1px;height:14px;background:#262626"></div>
<div class="a" style="left:1055px;top:995px;width:1px;height:14px;background:#1c1c1c"></div>
<div class="a" style="left:1085px;top:995px;width:1px;height:14px;background:#262626"></div>
<div class="a" style="left:1114px;top:995px;width:1px;height:14px;background:#1c1c1c"></div>
<div class="a" style="left:1144px;top:995px;width:1px;height:14px;background:#262626"></div>
<div class="a" style="left:1173px;top:995px;width:1px;height:14px;background:#1c1c1c"></div>
<div class="a" style="left:1202px;top:995px;width:1px;height:14px;background:#262626"></div>
<div class="a" style="left:1232px;top:995px;width:1px;height:14px;background:#1c1c1c"></div>
<div class="a" style="left:1261px;top:995px;width:1px;height:14px;background:#262626"></div>
<div class="a" style="left:1291px;top:995px;width:1px;height:14px;background:#1c1c1c"></div>
<div class="a" style="left:1320px;top:995px;width:1px;height:14px;background:#262626"></div>
<div class="a" style="left:1350px;top:995px;width:1px;height:14px;background:#1c1c1c"></div>
<div class="a" style="left:1379px;top:995px;width:1px;height:14px;background:#262626"></div>
<div class="a" style="left:1409px;top:995px;width:1px;height:14px;background:#1c1c1c"></div>
<div class="a" style="left:1438px;top:995px;width:1px;height:14px;background:#262626"></div>
<div class="a" style="left:1468px;top:995px;width:1px;height:14px;background:#1c1c1c"></div>
<div class="a" style="left:1497px;top:995px;width:1px;height:14px;background:#262626"></div>
<div class="a" style="left:1527px;top:995px;width:1px;height:14px;background:#1c1c1c"></div>
<div class="a" style="left:1556px;top:995px;width:1px;height:14px;background:#262626"></div>
<div class="a" style="left:9px;top:1009px;width:1566px;height:8px;background:#555555;border-radius:4px"></div>
<svg class="a" style="left:9px;top:1009px;" width="10" height="8" viewBox="0 0 10 8"><circle cx="4" cy="4" r="3.2" fill="#333" stroke="#666" stroke-width="0.8"/></svg>
<svg class="a" style="left:1565px;top:1009px;" width="10" height="8" viewBox="0 0 10 8"><circle cx="5" cy="4" r="3.2" fill="#333" stroke="#666" stroke-width="0.8"/></svg>
<div class="a" style="left:47px;top:975px;width:24px;height:18px;background:#4772b3;border-radius:4px"></div>
<div class="t" style="left:-41px;width:200px;text-align:center;top:978px;color:#ffffff;font-size:11px;">1</div>
<div class="a" style="left:58px;top:992px;width:2px;height:17px;background:#4772b3"></div>
<div class="a" style="left:58px;top:1016px;width:2px;height:1px;background:#4772b3"></div>
<svg class="a" style="left:2px;top:988px;" width="6" height="10" viewBox="0 0 6 10"><polyline points="1,1 5,5 1,9" fill="none" stroke="#7a7a7a" stroke-width="1.1"/></svg>
<div class="a" style="left:1580px;top:982px;width:3px;height:28px;background:#3a3a3a;border-radius:2px"></div>
<svg class="a" style="left:1577px;top:988px;" width="6" height="10" viewBox="0 0 6 10"><polyline points="5,1 1,5 5,9" fill="none" stroke="#8a8a8a" stroke-width="1.1"/></svg>
</body></html>
